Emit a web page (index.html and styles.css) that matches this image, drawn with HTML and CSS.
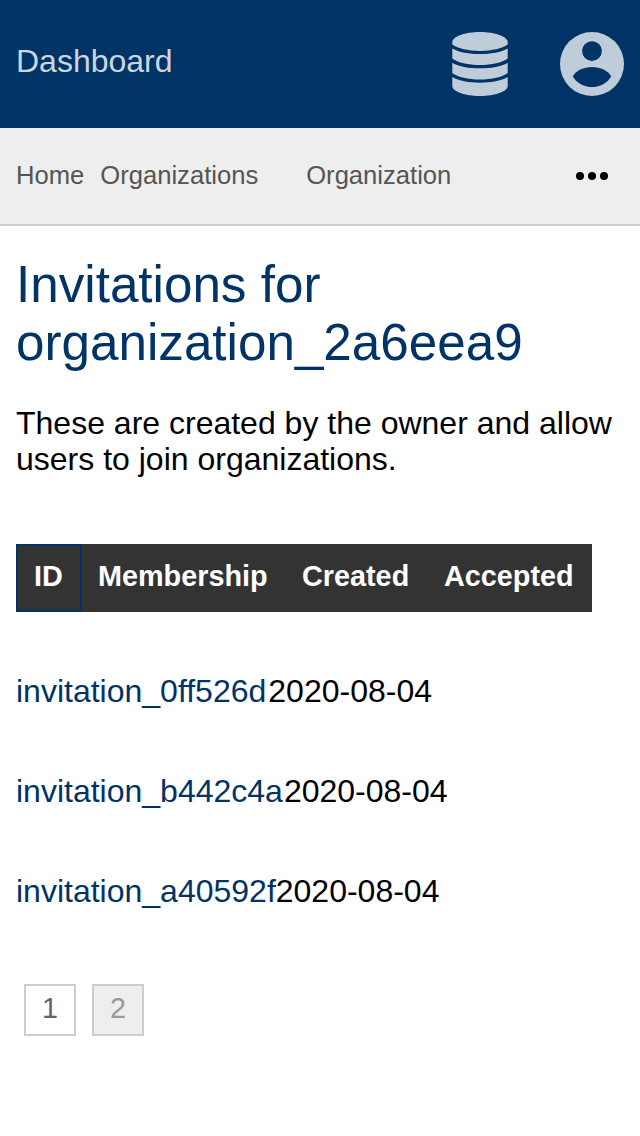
FILE: index.html
```html
<!DOCTYPE html>
<html lang="en">
<head>
<meta charset="utf-8">
<title>Invitations</title>
<link rel="stylesheet" href="styles.css">
</head>
<body>
<header class="topbar">
  <a class="brand">Dashboard</a>
  <div class="menus">
    <svg class="icon-db" viewBox="0 0 56 64" fill="currentColor"><path d="M28 0C43 0 55.700 4.500 55.700 10.200V12.600C50 16.600 40 18.900 28 18.900S6 16.600 .3 12.600V10.200C.3 4.500 13 0 28 0z"/><path d="M.3 16.400C7 20.300 17 21.900 28 21.900S49 20.300 55.700 16.400V26.600C50 30.800 40 33.100 28 33.100S6 30.800 .3 26.600z"/><path d="M.3 30.700C7 34.700 17 36.300 28 36.300S49 34.700 55.700 30.700V41C50 45.200 40 47.500 28 47.500S6 45.200 .3 41z"/><path d="M.3 45.100C7 49.100 17 50.800 28 50.800S49 49.100 55.700 45.100V54C55.700 59.500 43 64 28 64S.3 59.500 .3 54z"/></svg>
    <svg class="icon-user" viewBox="0 0 64 64"><circle cx="32" cy="32" r="32" fill="currentColor"/><circle cx="32" cy="19.100" r="9.900" fill="#036"/><path d="M12.800 44.500C15.500 38.500 24 34.900 32 34.900S48.500 38.500 51.200 44.500C47.300 51 40 55.100 32 55.100S16.700 51 12.800 44.500z" fill="#036"/></svg>
  </div>
</header>
<nav class="crumbs">
  <a class="crumb-home">Home</a>
  <a class="crumb-list">Organizations</a>
  <a class="crumb-item">Organization</a>
  <svg class="more" viewBox="0 0 32 8"><circle cx="4" cy="4" r="4"/><circle cx="16" cy="4" r="4"/><circle cx="28" cy="4" r="4"/></svg>
</nav>
<main class="content">
  <h1 class="title">Invitations for organization_2a6eea9</h1>
  <p class="intro">These are created by the owner and allow users to join organizations.</p>
  <div class="head">
    <div class="cell cell-id">ID</div>
    <div class="cell cell-membership">Membership</div>
    <div class="cell cell-created">Created</div>
    <div class="cell cell-accepted">Accepted</div>
  </div>
  <div class="rows">
    <div class="row row-first"><a class="link">invitation_0ff526d</a><span>2020-08-04</span></div>
    <div class="row row-second"><a class="link">invitation_b442c4a</a><span>2020-08-04</span></div>
    <div class="row"><a class="link">invitation_a40592f</a><span>2020-08-04</span></div>
  </div>
  <div class="pages"><a class="page">1</a><a class="page page-current">2</a></div>
</main>
</body>
</html>
```
FILE: styles.css
```css
* { box-sizing: border-box; }
body { margin: 0; background: #fff; color: #000; font: 32px/36px "Liberation Sans", Arial, sans-serif; }
.topbar { height: 128px; padding: 0 16px; display: flex; justify-content: space-between; align-items: center; background: #036; color: #bfccd9; }
.brand { padding-bottom: 6px; color: #ccd6e0; }
.menus { display: flex; gap: 52px; }
.icon-db { width: 56px; height: 64px; }
.icon-user { width: 64px; height: 64px; }
.crumbs { height: 98px; padding: 0 32px 0 16px; display: flex; align-items: center; background: #eee; border-bottom: 2px solid #ccc; color: #555; font-size: 25.6px; line-height: 30px; }
.crumb-home, .crumb-list, .crumb-item { padding-bottom: 2px; }
.crumb-list { margin-left: 16px; }
.crumb-item { margin-left: 48px; }
.more { width: 32px; height: 8px; margin-left: auto; fill: #000; }
.content { padding: 30px 16px 0; }
.title { margin: 0; color: #036; font-size: 51.2px; line-height: 58px; font-weight: 400; }
.intro { margin: 33px 0 0; }
.head { display: flex; width: 576px; height: 68px; margin-top: 67px; background: #333; color: #fff; font-size: 28.8px; font-weight: 700; line-height: 32px; }
.cell { padding: 16px 18px; }
.cell-id { width: 66px; padding: 14px 16px; border: 2px solid #036; }
.cell-membership { width: 202px; padding-left: 16px; }
.cell-created { width: 142px; }
.cell-accepted { width: 166px; }
.rows { padding-top: 29px; }
.row { height: 100px; display: flex; align-items: center; }
.row-first { gap: 2px; }
.row-second { gap: 1px; }
.link { color: #036; }
.pages { display: flex; gap: 16px; padding: 43px 8px 0; }
.page { width: 52px; height: 52px; border: 2px solid #ccc; color: #666; font-size: 28.8px; line-height: 44px; text-align: center; }
.page-current { background: #eee; color: #999; }
```
